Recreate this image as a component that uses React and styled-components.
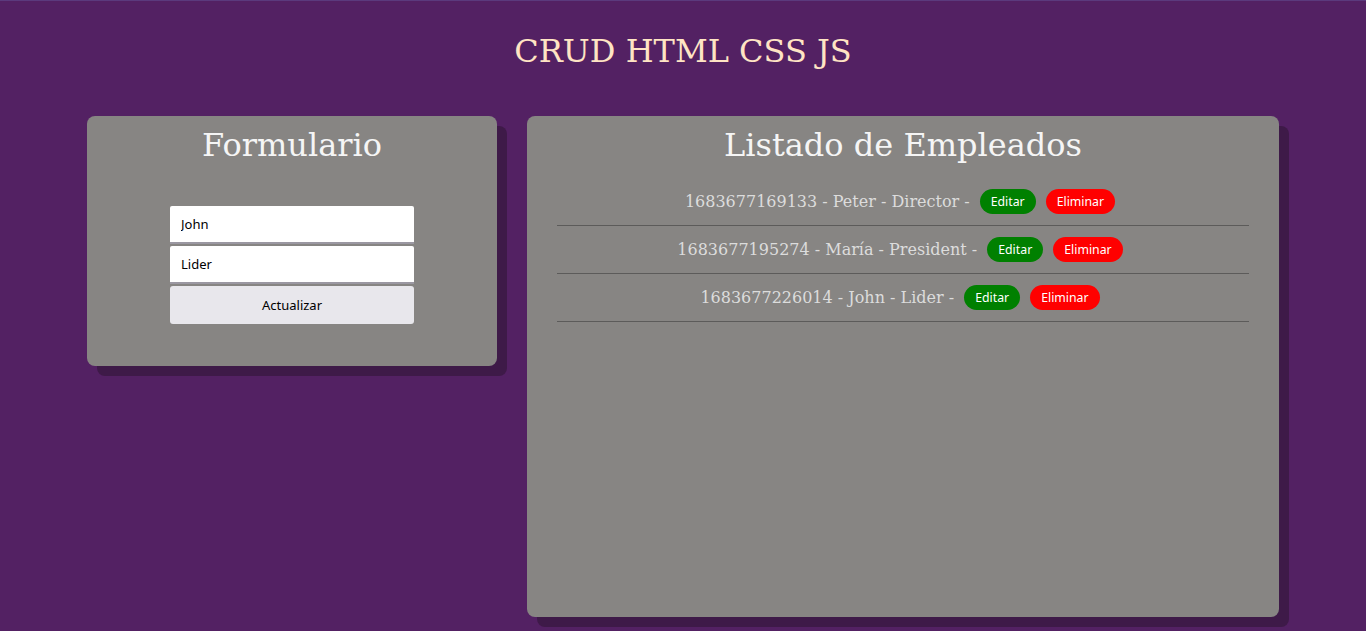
import React from "react";
import styled, { createGlobalStyle } from "styled-components";

const GlobalStyle = createGlobalStyle`
  html, body { margin: 0; padding: 0; }
  body {
    background: #532163;
    border-top: 1px solid #5b3a7d;
    font-family: "DejaVu Serif", serif;
    min-height: 630px;
  }
`;

const Title = styled.h1`
  margin: 0;
  padding-top: 30px;
  height: 85px;
  box-sizing: border-box;
  text-align: center;
  font-family: "DejaVu Serif", serif;
  font-weight: normal;
  font-size: 32px;
  line-height: 40px;
  color: #ffe4c4;
`;

const Main = styled.main`
  display: flex;
  justify-content: center;
  gap: 30px;
  padding-top: 30px;
`;

const Card = styled.section`
  width: ${(p) => p.$w}px;
  height: ${(p) => p.$h}px;
  box-sizing: border-box;
  background: #878583;
  border-radius: 8px;
  box-shadow: 10px 10px 0 #3e1a48;
  padding: 8px 30px 0;
`;

const CardTitle = styled.h2`
  margin: 0;
  text-align: center;
  font-family: "DejaVu Serif", serif;
  font-weight: normal;
  font-size: 32px;
  line-height: 42px;
  color: #f5f5f5;
`;

const Form = styled.form`
  width: 244px;
  margin: 40px auto 0;
  display: flex;
  flex-direction: column;
  gap: 2px;
`;

const Input = styled.input`
  height: 38px;
  box-sizing: border-box;
  border: none;
  border-bottom: 2px solid #9b98a2;
  border-radius: 2px 2px 0 0;
  background: #fff;
  padding: 0 11px;
  font-family: "Noto Sans", sans-serif;
  font-size: 13px;
  color: #000;
  outline: none;
`;

const SubmitButton = styled.button`
  height: 38px;
  border: none;
  border-radius: 3px;
  background: #e8e7ec;
  font-family: "Noto Sans", sans-serif;
  font-size: 13px;
  color: #000;
`;

const List = styled.ul`
  list-style: none;
  margin: 12px 0 0;
  padding: 0;
`;

const Row = styled.li`
  display: flex;
  justify-content: center;
  align-items: center;
  gap: 10px;
  padding: 11px 6px 11px 0;
  border-bottom: 1px solid #5c5b5a;
  font-family: "DejaVu Serif", serif;
  font-size: 16px;
  color: #dcdcdc;
`;

const RowText = styled.span`
  white-space: nowrap;
`;

const Pill = styled.button`
  height: 25px;
  padding: 0 11px;
  border: none;
  border-radius: 13px;
  background: ${(p) => (p.$danger ? "#ff0000" : "#008000")};
  color: #fff;
  font-family: "Noto Sans", sans-serif;
  font-size: 12.3px;
  line-height: 25px;
`;

const employees = [
  { id: "1683677169133", name: "Peter", role: "Director" },
  { id: "1683677195274", name: "María", role: "President" },
  { id: "1683677226014", name: "John", role: "Lider" },
];

export default function App() {
  return (
    <>
      <GlobalStyle />
      <Title>CRUD HTML CSS JS</Title>
      <Main>
        <Card $w={410} $h={250}>
          <CardTitle>Formulario</CardTitle>
          <Form onSubmit={(e) => e.preventDefault()}>
            <Input defaultValue="John" />
            <Input defaultValue="Lider" />
            <SubmitButton type="submit">Actualizar</SubmitButton>
          </Form>
        </Card>
        <Card $w={752} $h={501}>
          <CardTitle>Listado de Empleados</CardTitle>
          <List>
            {employees.map((e) => (
              <Row key={e.id}>
                <RowText>
                  {e.id} - {e.name} - {e.role} -
                </RowText>
                <Pill>Editar</Pill>
                <Pill $danger>Eliminar</Pill>
              </Row>
            ))}
          </List>
        </Card>
      </Main>
    </>
  );
}
